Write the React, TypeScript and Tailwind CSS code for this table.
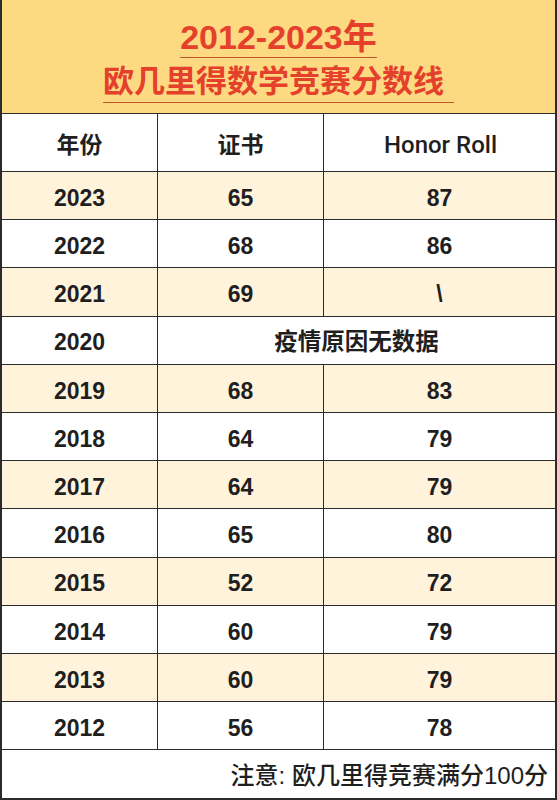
import React from 'react';

type Row = { year: string; cert?: string; honor?: string; note?: string };

const rows: Row[] = [
  { year: '2023', cert: '65', honor: '87' },
  { year: '2022', cert: '68', honor: '86' },
  { year: '2021', cert: '69', honor: '\\' },
  { year: '2020', note: '疫情原因无数据' },
  { year: '2019', cert: '68', honor: '83' },
  { year: '2018', cert: '64', honor: '79' },
  { year: '2017', cert: '64', honor: '79' },
  { year: '2016', cert: '65', honor: '80' },
  { year: '2015', cert: '52', honor: '72' },
  { year: '2014', cert: '60', honor: '79' },
  { year: '2013', cert: '60', honor: '79' },
  { year: '2012', cert: '56', honor: '78' },
];

const font = { fontFamily: '"Liberation Sans", "Noto Sans CJK SC", sans-serif' };

export default function App() {
  return (
    <div
      className="w-[557px] h-[800px] flex flex-col bg-white text-[#1f1f1f] border-l-2 border-r-2 border-b-2 border-[#2b2b2b] overflow-hidden"
      style={font}
    >
      {/* title */}
      <div className="h-[114px] shrink-0 bg-[#fdd982] flex flex-col items-center border-b-[1.5px] border-[#2b2b2b]">
        <span className="mt-[17px] text-[34px] leading-[40px] font-bold text-[#e4402b] border-b-[1.5px] border-[#c0582c]">
          2012-2023年
        </span>
        <span className="mt-[6px] pr-[10px] text-[31px] leading-[36px] font-bold text-[#e4402b] border-b-[1.5px] border-[#c0582c] pb-[2px]">
          欧几里得数学竞赛分数线
        </span>
      </div>

      {/* column heads */}
      <div className="h-[58px] shrink-0 grid grid-cols-[156px_166px_1fr] border-b-[1.5px] border-[#2b2b2b] text-[23px] font-bold">
        <div className="flex items-center justify-center pt-[5px] border-r-[1.5px] border-[#2b2b2b]">年份</div>
        <div className="flex items-center justify-center pt-[5px] border-r-[1.5px] border-[#2b2b2b]">证书</div>
        <div className="flex items-center justify-center pt-[5px] font-medium text-[24px] font-['Roboto'] pl-[2px]">Honor Roll</div>
      </div>

      {rows.map((r, i) => (
        <div
          key={r.year}
          className={
            'h-[48.2px] shrink-0 grid grid-cols-[156px_166px_1fr] border-b-[1.5px] border-[#2b2b2b] text-[23px] font-bold ' +
            (i % 2 === 0 ? 'bg-[#fff3dc]' : 'bg-white')
          }
        >
          <div className="flex items-center justify-center pt-[5px] border-r-[1.5px] border-[#2b2b2b]">{r.year}</div>
          {r.note ? (
            <div className="col-span-2 flex items-center justify-center pt-[5px] text-[23.5px]">{r.note}</div>
          ) : (
            <>
              <div className="flex items-center justify-center pt-[5px] border-r-[1.5px] border-[#2b2b2b]">{r.cert}</div>
              <div className="flex items-center justify-center pt-[5px]">{r.honor}</div>
            </>
          )}
        </div>
      ))}

      <div className="flex-1 flex items-center justify-end pr-[7px] pt-[3px] text-[24px] font-medium">
        注意: 欧几里得竞赛满分100分
      </div>
    </div>
  );
}
